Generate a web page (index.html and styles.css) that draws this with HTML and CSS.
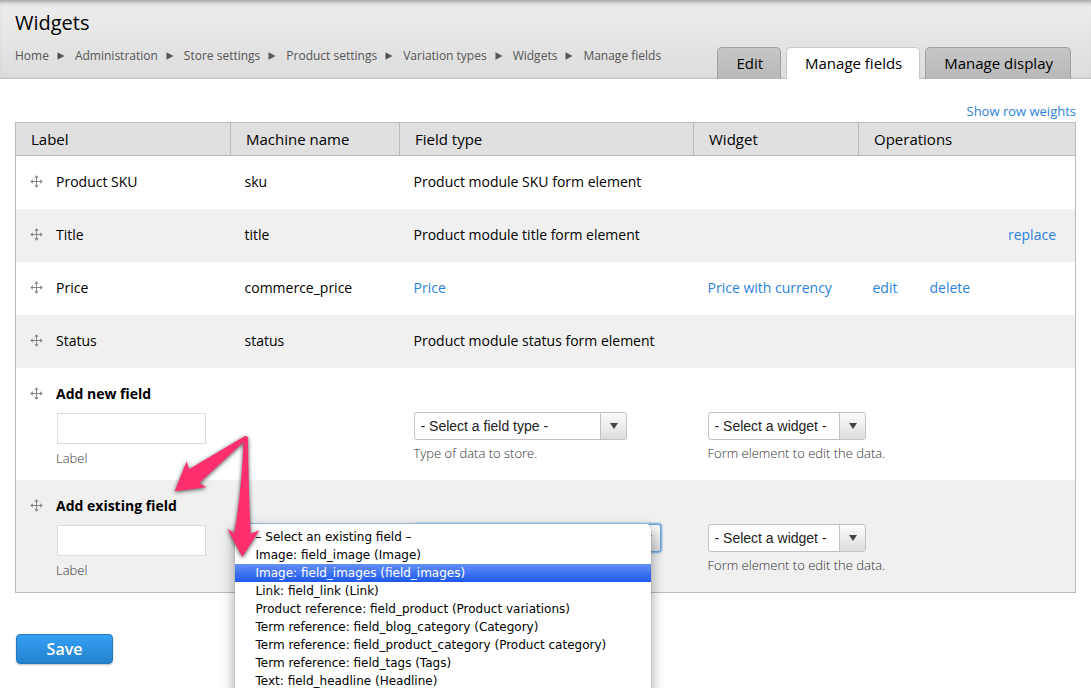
FILE: index.html
```html
<!DOCTYPE html>
<html lang="en">
<head>
<meta charset="utf-8">
<title>Widgets</title>
<meta name="viewport" content="width=device-width, initial-scale=1">
<link rel="stylesheet" href="styles.css">
</head>
<body>
<svg class="defs" width="0" height="0" aria-hidden="true">
  <symbol id="move" viewBox="0 0 13 13">
    <path d="M6.500 1.500v10M1.500 6.500h10" fill="none" stroke="#858585" stroke-width="1"/>
    <path d="M6.500 0.300L8.700 2.800H4.300zM6.500 12.700L8.700 10.200H4.300zM0.300 6.500L2.800 4.300V8.700zM12.700 6.500L10.200 4.300V8.700z" fill="#858585"/>
  </symbol>
  <symbol id="sep" viewBox="0 0 8 8"><path d="M0.500 0.300L7.500 4L0.500 7.700z" fill="#555"/></symbol>
</svg>
<div class="page">
  <header class="header">
    <div class="heading">
      <h1 class="title">Widgets</h1>
      <nav class="breadcrumb" aria-label="Breadcrumb">
        <a href="#">Home</a><svg class="sep"><use href="#sep"/></svg>
        <a href="#">Administration</a><svg class="sep"><use href="#sep"/></svg>
        <a href="#">Store settings</a><svg class="sep"><use href="#sep"/></svg>
        <a href="#">Product settings</a><svg class="sep"><use href="#sep"/></svg>
        <a href="#">Variation types</a><svg class="sep"><use href="#sep"/></svg>
        <a href="#">Widgets</a><svg class="sep"><use href="#sep"/></svg>
        <a href="#">Manage fields</a>
      </nav>
    </div>
    <nav class="tabs" aria-label="Tabs">
      <a class="tab" href="#">Edit</a>
      <a class="tab active" href="#">Manage fields</a>
      <a class="tab" href="#">Manage display</a>
    </nav>
  </header>

  <main class="content">
    <a class="weights" href="#">Show row weights</a>
    <table class="fields">
      <colgroup><col class="c-label"><col class="c-name"><col class="c-type"><col class="c-widget"><col class="c-ops"></colgroup>
      <thead>
        <tr><th>Label</th><th>Machine name</th><th>Field type</th><th>Widget</th><th>Operations</th></tr>
      </thead>
      <tbody>
        <tr><td><div class="drag"><svg class="move"><use href="#move"/></svg><span>Product SKU</span></div></td><td>sku</td><td>Product module SKU form element</td><td></td><td></td></tr>
        <tr><td><div class="drag"><svg class="move"><use href="#move"/></svg><span>Title</span></div></td><td>title</td><td>Product module title form element</td><td></td><td><div class="ops end"><a href="#">replace</a></div></td></tr>
        <tr><td><div class="drag"><svg class="move"><use href="#move"/></svg><span>Price</span></div></td><td>commerce_price</td><td><a href="#">Price</a></td><td><a href="#">Price with currency</a></td><td><div class="ops"><a href="#">edit</a><a href="#">delete</a></div></td></tr>
        <tr><td><div class="drag"><svg class="move"><use href="#move"/></svg><span>Status</span></div></td><td>status</td><td>Product module status form element</td><td></td><td></td></tr>
        <tr class="add">
          <td><div class="drag"><svg class="move"><use href="#move"/></svg><div class="entry"><strong>Add new field</strong><input id="new-label" class="text" type="text"><label class="hint" for="new-label">Label</label></div></div></td>
          <td></td>
          <td><div class="control"><select id="new-type" class="select type"><option>- Select a field type -</option></select><label class="hint" for="new-type">Type of data to store.</label></div></td>
          <td><div class="control"><select id="new-widget" class="select widget"><option>- Select a widget -</option></select><label class="hint" for="new-widget">Form element to edit the data.</label></div></td>
          <td></td>
        </tr>
        <tr class="add">
          <td><div class="drag"><svg class="move"><use href="#move"/></svg><div class="entry"><strong>Add existing field</strong><input id="old-label" class="text" type="text"><label class="hint" for="old-label">Label</label></div></div></td>
          <td></td>
          <td><div class="control open"><select class="select existing" aria-label="Existing field"><option></option></select>
            <ul class="menu" role="listbox" aria-label="Existing field">
              <li role="option">– Select an existing field –</li>
              <li role="option">Image: field_image (Image)</li>
              <li role="option" class="current" aria-selected="true">Image: field_images (field_images)</li>
              <li role="option">Link: field_link (Link)</li>
              <li role="option">Product reference: field_product (Product variations)</li>
              <li role="option">Term reference: field_blog_category (Category)</li>
              <li role="option">Term reference: field_product_category (Product category)</li>
              <li role="option">Term reference: field_tags (Tags)</li>
              <li role="option">Text: field_headline (Headline)</li>
            </ul></div></td>
          <td><div class="control"><select id="old-widget" class="select widget"><option>- Select a widget -</option></select><label class="hint" for="old-widget">Form element to edit the data.</label></div></td>
          <td></td>
        </tr>
      </tbody>
    </table>
    <button class="save" type="submit">Save</button>
  </main>

  <svg class="arrows" viewBox="0 0 330 420" aria-hidden="true">
    <path d="M254 34Q262 32 263 40L118 174L139 187L44 199L80 109L87 133Z"/>
    <path d="M251 38Q258 30 264 38Q265 190 272 326L298 316L247 396L202 311L223 325Q246 190 251 38Z"/>
  </svg>
</div>
</body>
</html>
```
FILE: styles.css
```css
* { box-sizing: border-box; }

body {
  margin: 0;
  background: #fff;
  color: #000;
  font: 14px/21px "Open Sans", sans-serif;
}

a { color: #2b82dc; text-decoration: none; }

.defs { position: absolute; }

.page {
  position: relative;
  min-height: 100vh;
  overflow: hidden;
}

.header {
  display: flex;
  justify-content: space-between;
  align-items: flex-end;
  padding: 9px 20px 0 15px;
  background: linear-gradient(#eee, #dcdcdc);
  box-shadow: inset 0 6px 5px -4px #999, inset 0 -2px 2px -1px #bbb;
}

.title {
  margin: 0;
  font-size: 20px;
  line-height: 28px;
  font-weight: 400;
}

.breadcrumb {
  display: flex;
  align-items: center;
  padding: 10px 0 15px;
  font-size: 12px;
  line-height: 17px;
}

.breadcrumb a { color: #555; }

.sep { width: 8px; height: 8px; margin: 0 10px 0 8px; }

.tabs { display: flex; gap: 5px; }

.tab {
  height: 32px;
  padding: 0 17px 0 18px;
  border: 1px solid #a0a0a0;
  border-bottom: 0;
  border-radius: 5px 5px 0 0;
  background: linear-gradient(#c6c6c6, #b8b8b8);
  color: #000;
  font-size: 15px;
  line-height: 30px;
}

.tab.active { background: #fff; border-color: #c8c8c8; }

.content {
  display: flex;
  flex-direction: column;
  align-items: flex-start;
  padding: 22px 15px;
}

.weights { align-self: flex-end; margin-bottom: 1px; font-size: 13px; line-height: 20px; }

.fields {
  width: 100%;
  table-layout: fixed;
  border-collapse: collapse;
  border: 1px solid #bbb;
}

.c-label { width: 215px; }
.c-name { width: 169px; }
.c-type { width: 294px; }
.c-widget { width: 165px; }

.fields th {
  height: 33px;
  padding: 0 15px;
  border: 1px solid #bbb;
  background: #e0e0e0;
  font-weight: 400;
  font-size: 15px;
  text-align: left;
}

.fields td {
  height: 53px;
  padding: 15px 15px 15px 14px;
  vertical-align: top;
}

.fields tbody tr:nth-child(even) { background: #f0f0f0; }

.drag { display: flex; gap: 13px; }
.move { flex: none; width: 13px; height: 13px; margin-top: 4px; }

.ops { display: flex; gap: 32px; }
.ops.end { justify-content: flex-end; padding-right: 4px; }

.fields .add td { height: 112px; padding-bottom: 0; }
.fields .add:last-child td { height: 113px; }

.entry, .control {
  display: flex;
  flex-direction: column;
  align-items: flex-start;
}

.control { position: relative; padding-top: 29px; }

.text {
  width: 149px;
  height: 31px;
  margin: 9px 0 4px 1px;
  padding: 0 6px;
  border: 1px solid #dcdcdc;
  background: #fff;
}

.hint {
  color: #333;
  font-size: 13px;
  font-weight: 300;
  line-height: 20px;
  white-space: nowrap;
}
.control .hint { margin-top: 3px; }

.select {
  appearance: none;
  height: 28px;
  padding: 0 32px 0 6px;
  border: 1px solid #c2c2c2;
  border-radius: 3px;
  background:
    url("data:image/svg+xml,%3Csvg xmlns='http://www.w3.org/2000/svg' width='8' height='6'%3E%3Cpath d='M0 0h8L4 6z' fill='%23444'/%3E%3C/svg%3E") right 8px center no-repeat,
    linear-gradient(#c2c2c2, #c2c2c2) right 25px top / 1px 100% no-repeat,
    linear-gradient(#fcfcfc, #ddd) right top / 25px 100% no-repeat,
    #fff;
  color: #222;
  font: 14px "Liberation Sans", Arial, sans-serif;
}

.type { width: 213px; }
.widget { width: 158px; }

.existing {
  width: 247px;
  border-color: #6da3dc;
  box-shadow: 0 0 2px 1px #6da3dc;
}

.menu {
  position: absolute;
  top: 29px;
  left: -179px;
  z-index: 1;
  width: 416px;
  margin: 0;
  padding: 4px 0;
  border-radius: 5px;
  background: #fff;
  box-shadow: 0 -1px 0 #8db4de, 0 6px 14px rgba(0, 0, 0, 0.4), 0 0 1px rgba(0, 0, 0, 0.4);
  list-style: none;
  font: 12px/18px "DejaVu Sans", sans-serif;
}

.menu li { padding-left: 21px; white-space: nowrap; }
.menu .current { background: linear-gradient(#648ff5, #1d58f0); color: #fff; }

.save {
  width: 97px;
  height: 30px;
  margin: 41px 0 0 1px;
  padding: 0;
  border: 1px solid #2478bd;
  border-radius: 4px;
  background: linear-gradient(#35a0f5, #2482cc);
  box-shadow: 0 1px 2px rgba(0, 0, 0, 0.25);
  color: #fff;
  font: 600 16px/28px "Open Sans", sans-serif;
}

.arrows {
  position: absolute;
  top: 425px;
  left: 160px;
  z-index: 2;
  width: 110px;
  height: 140px;
  fill: #ff2f6d;
  filter: drop-shadow(0 1px 2px rgba(0, 0, 0, 0.7));
  pointer-events: none;
}
```
